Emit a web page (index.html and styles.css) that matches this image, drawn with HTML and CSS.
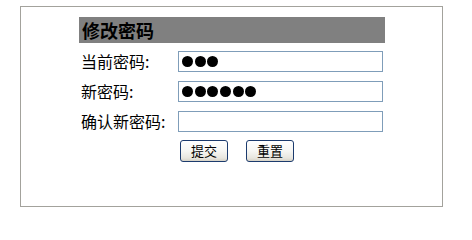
FILE: index.html
```html
<!DOCTYPE html>
<html lang="zh-CN">
<head>
<meta charset="utf-8">
<title>修改密码</title>
<link rel="stylesheet" href="styles.css">
</head>
<body>
<div class="panel">
  <form class="form">
    <div class="title">修改密码</div>
    <div class="rows">
      <label class="label">当前密码:</label>
      <div class="cell"><span class="field"><i class="dot"></i><i class="dot"></i><i class="dot"></i></span></div>
      <label class="label">新密码:</label>
      <div class="cell"><span class="field"><i class="dot"></i><i class="dot"></i><i class="dot"></i><i class="dot"></i><i class="dot"></i><i class="dot"></i></span></div>
      <label class="label">确认新密码:</label>
      <div class="cell"><input class="field" type="password"></div>
      <div class="label"></div>
      <div class="cell buttons">
        <button type="button" class="btn">提交</button>
        <button type="reset" class="btn">重置</button>
      </div>
    </div>
  </form>
</div>
</body>
</html>
```

FILE: styles.css
```css
html, body {
  margin: 0;
  padding: 0;
  background: #ffffff;
}

body {
  font-family: "Noto Sans CJK SC", "Noto Sans", sans-serif;
  color: #000;
}

.panel {
  box-sizing: border-box;
  width: 423px;
  height: 201px;
  margin: 6px 0 0 20px;
  border: 1px solid #a3a29c;
  background: #fff;
  padding: 10px 0 0 58px;
}

.form {
  width: 306px;
  margin: 0;
}

.title {
  height: 26px;
  line-height: 26px;
  background: #808080;
  font-size: 18px;
  font-weight: bold;
  padding-left: 3px;
  color: #000;
}

.rows {
  display: grid;
  grid-template-columns: 97px 1fr;
  grid-auto-rows: 30px;
  padding-top: 3px;
}

.label {
  font-size: 16px;
  line-height: 21px;
  padding-left: 2px;
  display: flex;
  align-items: center;
  white-space: nowrap;
}

.cell {
  display: flex;
  align-items: center;
  padding-left: 2px;
}

.field {
  box-sizing: border-box;
  display: flex;
  align-items: center;
  width: 205px;
  height: 21px;
  margin: 0;
  border: 1px solid #7f9db9;
  background: #fff;
  padding: 0 0 0 3px;
  font: inherit;
  outline: none;
}

.dot {
  display: block;
  width: 11px;
  height: 11px;
  border-radius: 50%;
  background: #000;
  margin-right: 1.7px;
}

.buttons {
  align-items: flex-start;
  padding-top: 4px;
  gap: 18px;
  padding-left: 4px;
}

.btn {
  box-sizing: border-box;
  width: 48px;
  height: 22px;
  margin: 0;
  padding: 0;
  border: 1px solid #1c3b6e;
  border-radius: 3px;
  background: linear-gradient(#ffffff 0%, #f6f6f3 50%, #e8e6df 85%, #d6d2c6 100%);
  font-family: "Noto Sans CJK SC", "Noto Sans", sans-serif;
  font-size: 13px;
  line-height: 20px;
  color: #000;
}
```
